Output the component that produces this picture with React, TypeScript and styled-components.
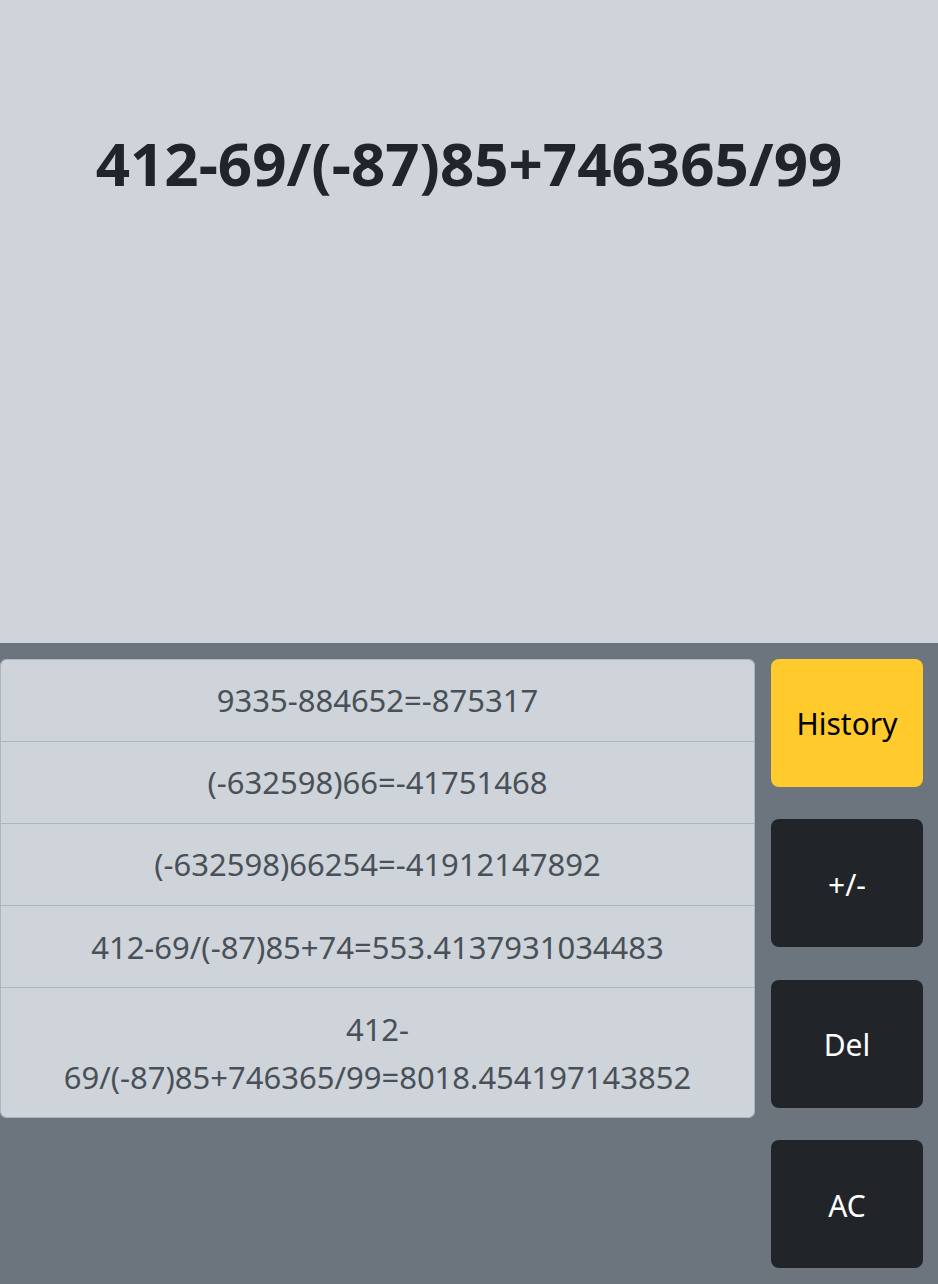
import React from 'react';
import styled, { createGlobalStyle } from 'styled-components';

const GlobalStyle = createGlobalStyle`
  html, body {
    margin: 0;
    padding: 0;
    background: #6c757d;
  }
  body {
    font-family: "Noto Sans", "Open Sans", "Liberation Sans", sans-serif;
  }
`;

const Page = styled.div`
  display: flex;
  flex-direction: column;
  width: 938px;
  height: 1284px;
`;

const Screen = styled.div`
  height: 643px;
  background: #ced4da;
  box-sizing: border-box;
  padding-top: 127px;
  text-align: center;
`;

const Expression = styled.h1`
  margin: 0;
  font-size: 60px;
  line-height: 72px;
  font-weight: 700;
  color: #212529;
`;

const Keypad = styled.div`
  flex: 1;
  display: flex;
  gap: 16px;
  padding: 16px 15px 16px 0;
  background: #6c757d;
`;

const HistoryList = styled.ul`
  flex: 0 0 755px;
  align-self: flex-start;
  margin: 0;
  padding: 0;
  list-style: none;
  border: 1px solid #adb5bd;
  border-radius: 6px;
  overflow: hidden;
  box-sizing: border-box;
`;

const HistoryItem = styled.li`
  padding: 16.5px 40px 16.7px;
  background: #ced4da;
  color: #495057;
  font-size: 31px;
  line-height: 48px;
  text-align: center;
  & + & {
    border-top: 1px solid #adb5bd;
  }
`;

const Side = styled.div`
  flex: 1;
  display: flex;
  flex-direction: column;
  gap: 32.5px;
`;

const Key = styled.button<{ $tone: 'warning' | 'dark' }>`
  height: 128px;
  border: none;
  border-radius: 8px;
  font-family: inherit;
  font-size: 30px;
  padding-top: 3px;
  background: ${(p) => (p.$tone === 'warning' ? '#ffca2c' : '#212529')};
  color: ${(p) => (p.$tone === 'warning' ? '#000' : '#fff')};
  cursor: pointer;
`;

const history = [
  '9335-884652=-875317',
  '(-632598)66=-41751468',
  '(-632598)66254=-41912147892',
  '412-69/(-87)85+74=553.4137931034483',
  '412-69/(-87)85+746365/99=8018.454197143852',
];

export default function App() {
  return (
    <Page>
      <GlobalStyle />
      <Screen>
        <Expression>412-69/(-87)85+746365/99</Expression>
      </Screen>
      <Keypad>
        <HistoryList>
          {history.map((h) => (
            <HistoryItem key={h}>{h}</HistoryItem>
          ))}
        </HistoryList>
        <Side>
          <Key $tone="warning">History</Key>
          <Key $tone="dark">+/-</Key>
          <Key $tone="dark">Del</Key>
          <Key $tone="dark">AC</Key>
        </Side>
      </Keypad>
    </Page>
  );
}
